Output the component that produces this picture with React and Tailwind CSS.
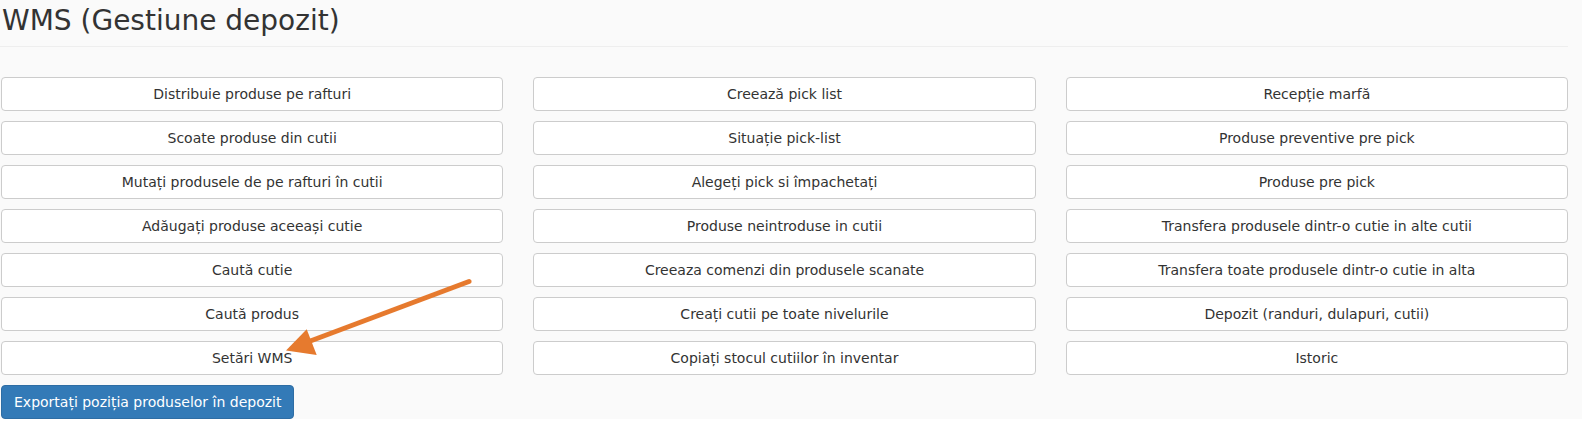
const columns = [
    [
        "Distribuie produse pe rafturi",
        "Scoate produse din cutii",
        "Mutați produsele de pe rafturi în cutii",
        "Adăugați produse aceeași cutie",
        "Caută cutie",
        "Caută produs",
        "Setări WMS",
    ],
    [
        "Creează pick list",
        "Situație pick-list",
        "Alegeți pick si împachetați",
        "Produse neintroduse in cutii",
        "Creeaza comenzi din produsele scanate",
        "Creați cutii pe toate nivelurile",
        "Copiați stocul cutiilor în inventar",
    ],
    [
        "Recepție marfă",
        "Produse preventive pre pick",
        "Produse pre pick",
        "Transfera produsele dintr-o cutie in alte cutii",
        "Transfera toate produsele dintr-o cutie in alta",
        "Depozit (randuri, dulapuri, cutii)",
        "Istoric",
    ],
];

function MenuButton({ label }) {
    return (
        <button className="h-[34px] w-full bg-white border border-[#cccccc] rounded-[4px] text-[14px] leading-[20px] text-[#333333] text-center px-3">
            {label}
        </button>
    );
}

function Arrow() {
    return (
        <svg
            className="absolute left-0 top-0 pointer-events-none"
            width="1582"
            height="439"
            viewBox="0 0 1582 439"
        >
            <line x1="469" y1="281.5" x2="309" y2="341.5" stroke="#e67a2e" strokeWidth="5" strokeLinecap="round" />
            <polygon points="286,350.5 306.7,329.3 316.7,355" fill="#e67a2e" />
        </svg>
    );
}

export default function App() {
    return (
        <div className="relative bg-white h-[439px]" style={{ fontFamily: "'DejaVu Sans', sans-serif" }}>
            <div className="bg-[#fafafa] h-[419px]">
                <div className="w-[1568px]">
                    <div className="pt-[4px] pb-[8px] border-b border-[#eeeeee]">
                        <h1 className="text-[28px] leading-[34px] text-[#333333] pl-[2px]">WMS (Gestiune depozit)</h1>
                    </div>
                    <div className="mt-[30px] pl-[1px] grid grid-cols-3 gap-x-[30px]">
                        {columns.map((col, i) => (
                            <div key={i} className="flex flex-col gap-[10px]">
                                {col.map((label) => (
                                    <MenuButton key={label} label={label} />
                                ))}
                            </div>
                        ))}
                    </div>
                    <div className="mt-[10px] pl-[1px]">
                        <button className="h-[34px] px-3 bg-[#337ab7] border border-[#2e6da4] rounded-[4px] text-white text-[14px] leading-[20px]">
                            Exportați poziția produselor în depozit
                        </button>
                    </div>
                </div>
            </div>
            <Arrow />
        </div>
    );
}
